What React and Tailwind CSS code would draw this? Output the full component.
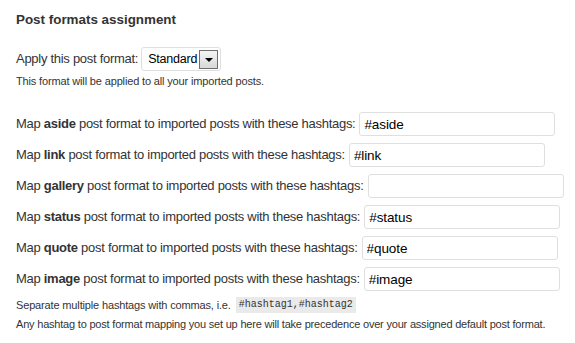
const rows = [
  { fmt: "aside", value: "#aside" },
  { fmt: "link", value: "#link" },
  { fmt: "gallery", value: "" },
  { fmt: "status", value: "#status" },
  { fmt: "quote", value: "#quote" },
  { fmt: "image", value: "#image" },
];

export default function App() {
  return (
    <div className="min-h-screen bg-white pl-4 text-[#333] font-['Liberation_Sans',Arial,sans-serif]">
      <h3 className="pt-[10px] text-[13.4px] font-bold leading-[20px]">Post formats assignment</h3>

      {/* default format */}
      <div className="mt-[17px] flex h-6 items-center gap-[3px] whitespace-nowrap text-[13px] tracking-[-0.28px]">
        <span>Apply this post format:</span>
        <div className="flex h-6 w-[80px] shrink-0 items-center justify-between rounded-[3px] border border-[#dfdfdf] bg-white pl-[6px] pr-[2px]">
          <span className="text-[12.5px] tracking-[-0.2px] text-black">Standard</span>
          <div className="flex h-[19px] w-[19px] items-center justify-center border border-[#6f6f6f] bg-gradient-to-b from-[#f4f4f4] to-[#d8d8d8]">
            <div className="mt-[1px] h-0 w-0 border-x-[4px] border-t-[4px] border-x-transparent border-t-black" />
          </div>
        </div>
      </div>
      <p className="mt-[3px] whitespace-nowrap text-[11px] leading-[14px] tracking-[-0.15px]">
        This format will be applied to all your imported posts.
      </p>

      {/* hashtag mappings */}
      <div className="mt-[24px] flex flex-col gap-[7px]">
        {rows.map((r) => (
          <div key={r.fmt} className="flex h-6 items-center gap-[4px] whitespace-nowrap text-[13px] tracking-[-0.28px]">
            <span>
              Map <b>{r.fmt}</b> post format to imported posts with these hashtags:
            </span>
            <input
              readOnly
              value={r.value}
              className="h-6 w-[196px] shrink-0 rounded-[3px] border border-[#dfdfdf] bg-white px-[4px] text-[13.5px] tracking-[-0.1px] text-black outline-none"
            />
          </div>
        ))}
      </div>

      <p className="mt-[6px] flex items-center whitespace-nowrap text-[11px] leading-4 tracking-[-0.15px]">
        Separate multiple hashtags with commas, i.e.
        <code className="ml-[5px] bg-[#eaeaea] px-[3px] font-['Liberation_Mono',monospace] text-[10px] leading-4 tracking-normal text-[#333]">
          #hashtag1,#hashtag2
        </code>
      </p>
      <p className="mt-[4px] whitespace-nowrap text-[11px] leading-[14px] tracking-[-0.2px]">
        Any hashtag to post format mapping you set up here will take precedence over your assigned default post format.
      </p>
    </div>
  );
}
